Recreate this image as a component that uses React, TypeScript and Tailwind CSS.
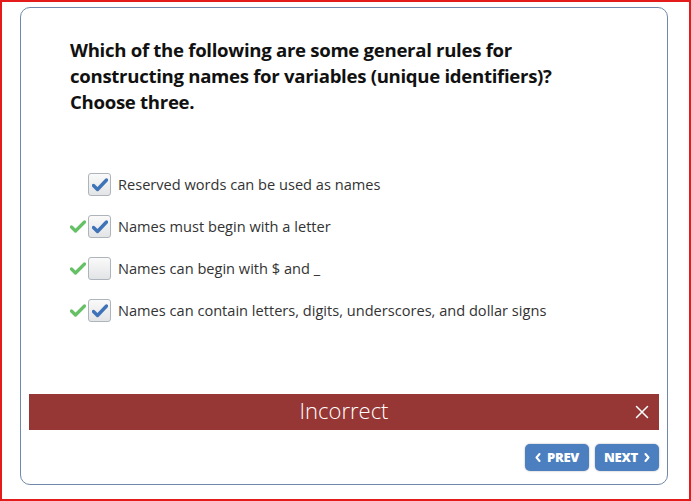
import React from "react";

const BlueCheck = () => (
  <svg width="16" height="14" viewBox="0 0 16 14">
    <path d="M1.5 7.5 L5.5 11.5 L14.5 2" fill="none" stroke="#3f73b8" strokeWidth="3.4" strokeLinecap="round" strokeLinejoin="round" />
  </svg>
);

const GreenCheck = () => (
  <svg width="16" height="14" viewBox="0 0 16 14">
    <path d="M1.5 7 L5.5 11 L14.5 2" fill="none" stroke="#66c066" strokeWidth="3.2" strokeLinecap="round" strokeLinejoin="round" />
  </svg>
);

const Chevron = ({ dir }: { dir: "l" | "r" }) => (
  <svg width="6" height="9" viewBox="0 0 6 9">
    <path d={dir === "l" ? "M4.5 1 L1.5 4.5 L4.5 8" : "M1.5 1 L4.5 4.5 L1.5 8"} fill="none" stroke="white" strokeWidth="2" strokeLinecap="round" strokeLinejoin="round" />
  </svg>
);

const options = [
  { text: "Reserved words can be used as names", checked: true, correct: false },
  { text: "Names must begin with a letter", checked: true, correct: true },
  { text: "Names can begin with $ and _", checked: false, correct: true },
  { text: "Names can contain letters, digits, underscores, and dollar signs", checked: true, correct: true },
];

export default function App() {
  return (
    <div className="w-[691px] h-[501px] border-2 border-[#e31b1b] bg-white pt-[5px] pl-[18px]" style={{ fontFamily: '"Open Sans", sans-serif' }}>
      <div className="w-[648px] h-[478px] border border-[#7089ab] rounded-[10px] flex flex-col">
        <div className="pl-[49px] pt-[29px] text-[18.6px] leading-[26px] font-bold text-[#111] tracking-[-0.3px]">
          Which of the following are some general rules for<br />
          constructing names for variables (unique identifiers)?<br />
          Choose three.
        </div>
        <div className="mt-[58px] flex flex-col gap-[19px] pl-[49px]">
          {options.map((o, i) => (
            <div key={i} className="flex items-center h-[23px]">
              <div className="w-[18px] flex items-center">{o.correct ? <GreenCheck /> : null}</div>
              <div className="w-[23px] h-[23px] border border-[#aeb4bb] rounded-[3px] bg-gradient-to-b from-[#fafafa] to-[#e3e4e6] flex items-center justify-center">
                {o.checked ? <BlueCheck /> : null}
              </div>
              <div className="ml-[7px] text-[14.6px] text-[#333]">{o.text}</div>
            </div>
          ))}
        </div>
        <div className="flex-1" />
        <div className="mx-[8px] h-[36px] bg-[#963735] relative flex items-center justify-center text-white text-[22px] font-light pb-[3px]">
          Incorrect
          <svg className="absolute right-[10px] top-[11px]" width="14" height="14" viewBox="0 0 14 14">
            <path d="M1.5 1.5 L12.5 12.5 M12.5 1.5 L1.5 12.5" stroke="white" strokeWidth="1.5" strokeLinecap="round" />
          </svg>
        </div>
        <div className="flex justify-end gap-[6px] mr-[8px] mt-[14px] mb-[13px]">
          <button className="w-[64px] h-[27px] rounded-[5px] bg-[#4b7fc0] text-white text-[13px] font-extrabold tracking-[-0.3px] flex items-center justify-center gap-[6px] shadow-[0_0_2px_rgba(0,0,0,0.35)]">
            <Chevron dir="l" />PREV
          </button>
          <button className="w-[64px] h-[27px] rounded-[5px] bg-[#4b7fc0] text-white text-[13px] font-extrabold tracking-[-0.3px] flex items-center justify-center gap-[6px] shadow-[0_0_2px_rgba(0,0,0,0.35)]">
            NEXT<Chevron dir="r" />
          </button>
        </div>
      </div>
    </div>
  );
}
